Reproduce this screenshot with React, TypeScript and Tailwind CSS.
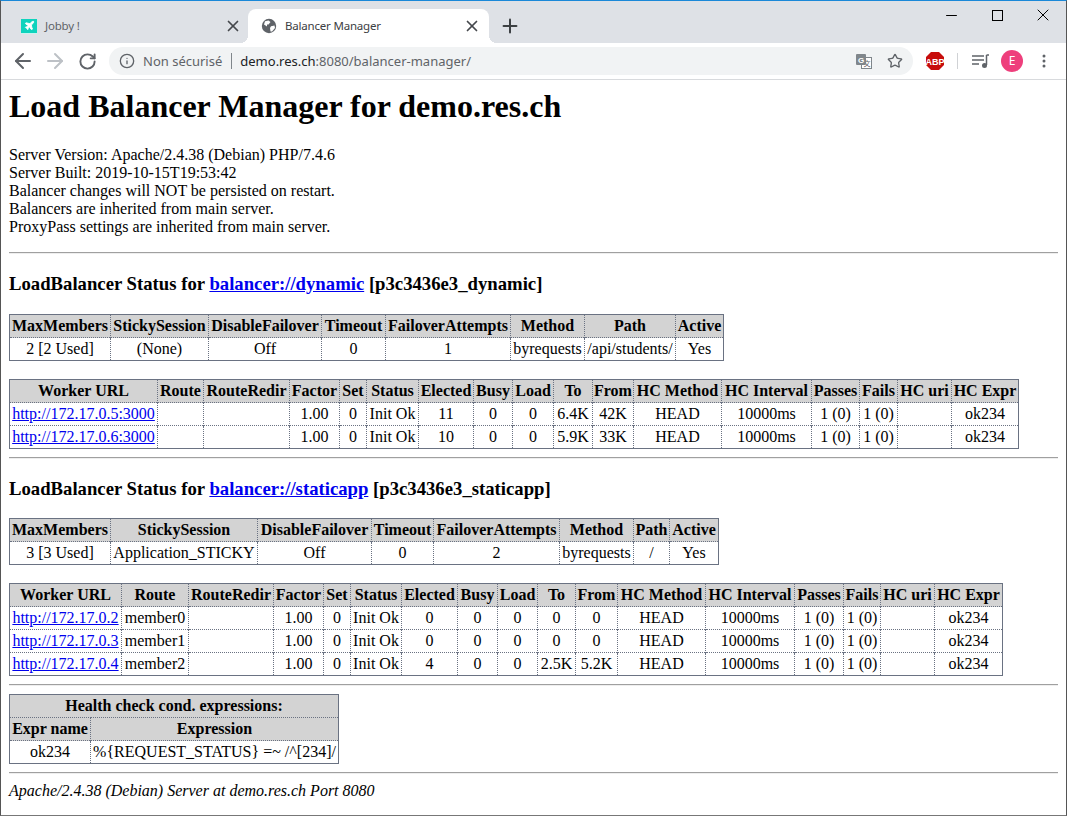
import { ArrowLeft, ArrowRight, RotateCw, Info, Star, X, Plus, Minus, Plane } from 'lucide-react'

const serif = { fontFamily: '"Liberation Serif", serif' }

type Cell = string | { href: string }

const DataTable = ({ head, rows, cols, width, className = '' }: { head: string[]; rows: Cell[][]; cols: string[]; width: string; className?: string }) => (
  <table className={`table-fixed border-collapse border border-gray-500 ${width} ${className}`}>
    <colgroup>
      {cols.map((c, i) => (
        <col key={i} className={c} />
      ))}
    </colgroup>
    <thead>
      <tr>
        {head.map((h, i) => (
          <th key={i} className="whitespace-nowrap bg-[#d3d3d3] px-0 py-[2px] font-bold leading-[18px] border-l border-dotted border-l-gray-500 first:border-l-0">
            {h}
          </th>
        ))}
      </tr>
    </thead>
    <tbody>
      {rows.map((row, r) => (
        <tr key={r}>
          {row.map((c, i) => (
            <td key={i} className="whitespace-nowrap px-0 py-[2px] text-center leading-[18px] border-t border-l border-dotted border-gray-500 first:border-l-0">
              {typeof c === 'string' ? c : <a href={c.href} className="text-[#0000ee] underline">{c.href}</a>}
            </td>
          ))}
        </tr>
      ))}
    </tbody>
  </table>
)

const workerHead = ['Worker URL', 'Route', 'RouteRedir', 'Factor', 'Set', 'Status', 'Elected', 'Busy', 'Load', 'To', 'From', 'HC Method', 'HC Interval', 'Passes', 'Fails', 'HC uri', 'HC Expr']

const worker = (href: string, route: string, elected: string, to: string, from: string): Cell[] => [
  { href }, route, '', '1.00', '0', 'Init Ok', elected, '0', '0', to, from, 'HEAD', '10000ms', '1 (0)', '1 (0)', '', 'ok234',
]

const balancerHead = ['MaxMembers', 'StickySession', 'DisableFailover', 'Timeout', 'FailoverAttempts', 'Method', 'Path', 'Active']

const dynamicCols = ['w-[101px]', 'w-[98px]', 'w-[113px]', 'w-[64px]', 'w-[125px]', 'w-[74px]', 'w-[91px]', 'w-[48px]']
const dynamicWorkerCols = ['w-[148px]', 'w-[46px]', 'w-[86px]', 'w-[50px]', 'w-[27px]', 'w-[52px]', 'w-[55px]', 'w-[39px]', 'w-[41px]', 'w-[39px]', 'w-[41px]', 'w-[88px]', 'w-[90px]', 'w-[48px]', 'w-[38px]', 'w-[54px]', 'w-[67px]']
const staticCols = ['w-[101px]', 'w-[147px]', 'w-[114px]', 'w-[62px]', 'w-[126px]', 'w-[74px]', 'w-[36px]', 'w-[49px]']
const staticWorkerCols = ['w-[112px]', 'w-[67px]', 'w-[85px]', 'w-[50px]', 'w-[27px]', 'w-[51px]', 'w-[56px]', 'w-[40px]', 'w-[40px]', 'w-[38px]', 'w-[42px]', 'w-[88px]', 'w-[89px]', 'w-[49px]', 'w-[37px]', 'w-[54px]', 'w-[68px]']

const Rule = ({ className = '' }: { className?: string }) => <hr className={`border-0 border-t border-b border-t-[#a0a0a0] border-b-[#eeeeee] ${className}`} />

const Globe = () => (
  <svg width="16" height="16" viewBox="0 0 16 16" className="shrink-0">
    <circle cx="8" cy="8" r="7.2" fill="#5f6368" />
    <path d="M4 3.2 7.5 2.5 9.5 4 7.5 6.5 6 6.5 6 8.5 3 6.5ZM10 8.2 13.5 7.5 14 10 11 13.5 9.5 13.5 9 10Z" fill="#fff" />
  </svg>
)

const Tab = ({ active, icon, title }: { active?: boolean; icon: React.ReactNode; title: string }) => (
  <div
    className={
      active
        ? "relative flex h-[34px] w-[241px] items-center rounded-t-[8px] bg-white pl-[13px] pr-[8px] text-[11.5px] tracking-[-0.2px] text-[#3c4043] before:absolute before:bottom-0 before:left-[-8px] before:h-[8px] before:w-[8px] before:bg-[radial-gradient(circle_at_0_0,transparent_8px,white_8px)] before:content-[''] after:absolute after:bottom-0 after:right-[-8px] after:h-[8px] after:w-[8px] after:bg-[radial-gradient(circle_at_100%_0,transparent_8px,white_8px)] after:content-['']"
        : 'flex h-[34px] w-[240px] items-center pl-[13px] pr-[6px] text-[11.5px] tracking-[-0.2px] text-[#5f6368]'
    }
  >
    {icon}
    <span className="ml-[8px] flex-1">{title}</span>
    <X size={18} strokeWidth={1.7} absoluteStrokeWidth className="text-[#45484c]" />
  </div>
)

export default function App() {
  return (
    <div className="flex h-[816px] w-[1067px] flex-col overflow-hidden border-x border-b border-t border-x-[#555] border-b-[#777] border-t-[#1a88d8] bg-white text-black">
      {/* browser chrome */}
      <div className="flex h-[42px] bg-[#dee1e6]" style={{ fontFamily: '"Noto Sans", sans-serif' }}>
        <div className="flex items-end pl-[7px]">
          <Tab
            title="Jobby !"
            icon={
              <span className="flex h-[15px] w-[16px] items-center justify-center border-b border-b-[#c9f3ee] bg-[#0fd3bd]">
                <Plane size={11} className="text-white" fill="white" />
              </span>
            }
          />
          <Tab active title="Balancer Manager" icon={<Globe />} />
          <Plus size={22} strokeWidth={2} absoluteStrokeWidth className="mb-[6px] ml-[10px] text-[#3c4043]" />
        </div>
        <div className="ml-auto flex">
          <div className="flex h-[28px] w-[46px] items-center justify-center"><Minus size={17} strokeWidth={1} absoluteStrokeWidth className="text-black" /></div>
          <div className="flex h-[28px] w-[46px] items-center justify-center"><span className="h-[11px] w-[11px] border border-black" /></div>
          <div className="flex h-[28px] w-[46px] items-center justify-center"><X size={20} strokeWidth={1} absoluteStrokeWidth className="text-black" /></div>
        </div>
      </div>
      <div className="flex h-[37px] items-center border-b border-[#d8dadd] bg-white pl-[10px]" style={{ fontFamily: '"Noto Sans", sans-serif' }}>
        <ArrowLeft size={24} strokeWidth={2} className="text-[#5f6368]" />
        <ArrowRight size={24} strokeWidth={2} className="ml-[8px] text-[#bdc1c6]" />
        <RotateCw size={19} strokeWidth={2.4} className="ml-[11px] text-[#5f6368]" />
        <div className="ml-[12px] flex h-[28px] w-[804px] items-center rounded-full bg-[#f1f3f4] pl-[10px] pr-[10px] text-[13px]">
          <Info size={16} strokeWidth={2} className="text-[#5f6368]" />
          <span className="ml-[8px] pt-px text-[#5f6368]">Non sécurisé</span>
          <span className="ml-[9px] mr-[8px] h-[16px] w-px bg-[#80868b]" />
          <span className="pt-px text-[#202124]">demo.res.ch</span>
          <span className="pt-px text-[#5f6368]">:8080/balancer-manager/</span>
          <svg width="16" height="16" viewBox="0 0 16 16" className="ml-auto shrink-0">
            <rect x="5.5" y="4.5" width="10" height="11" fill="#fff" stroke="#80868b" />
            <text x="11" y="13" textAnchor="middle" fontSize="7" fill="#5f6368" fontFamily="Noto Sans CJK SC, sans-serif">文</text>
            <rect x="0" y="1" width="10" height="11" rx="1" fill="#80868b" />
            <text x="5" y="9.5" textAnchor="middle" fontSize="8" fontWeight="700" fill="#fff" fontFamily="Liberation Sans, sans-serif">G</text>
          </svg>
          <Star size={16} strokeWidth={2} className="ml-[15px] text-[#5f6368]" />
        </div>
        <svg width="18" height="18" viewBox="0 0 18 18" className="ml-[13px] shrink-0">
          <polygon points="5,0 13,0 18,5 18,13 13,18 5,18 0,13 0,5" fill="#c70d0c" />
          <text x="9" y="12.5" textAnchor="middle" fontSize="9" fontWeight="700" fill="#fff" fontFamily="Liberation Sans, sans-serif">ABP</text>
        </svg>
        <span className="ml-[13px] h-[16px] w-px bg-[#d0d2d5]" />
        <svg width="18" height="16" viewBox="0 0 18 16" className="ml-[14px] shrink-0">
          <path d="M0 3h12M0 7h12M0 11h7" stroke="#5f6368" strokeWidth="1.5" fill="none" />
          <path d="M14.5 2v10" stroke="#5f6368" strokeWidth="1.5" />
          <path d="M14.5 2h2.5" stroke="#5f6368" strokeWidth="1.5" />
          <circle cx="12.5" cy="12.5" r="2.5" fill="#5f6368" />
        </svg>
        <span className="ml-[11px] flex h-[22px] w-[22px] items-center justify-center rounded-full bg-[#ee3f7c] text-[12px] text-white">E</span>
        <svg width="4" height="14" viewBox="0 0 4 14" className="ml-[19px] shrink-0">
          <circle cx="2" cy="2" r="1.5" fill="#5f6368" />
          <circle cx="2" cy="7" r="1.5" fill="#5f6368" />
          <circle cx="2" cy="12" r="1.5" fill="#5f6368" />
        </svg>
      </div>

      {/* page */}
      <div className="px-[8px] text-[16px] leading-[18px]" style={serif}>
        <h1 className="mt-[8px] text-[32px] font-bold leading-[37px]">Load Balancer Manager for demo.res.ch</h1>
        <div className="mt-[21px]">
          <div>Server Version: Apache/2.4.38 (Debian) PHP/7.4.6</div>
          <div>Server Built: 2019-10-15T19:53:42</div>
          <div>Balancer changes will NOT be persisted on restart.</div>
          <div>Balancers are inherited from main server.</div>
          <div>ProxyPass settings are inherited from main server.</div>
        </div>
        <Rule className="mt-[16px]" />
        <h3 className="mt-[19px] text-[18.72px] font-bold leading-[21px]">
          LoadBalancer Status for <a href="#" className="text-[#0000ee] underline">balancer://dynamic</a> [p3c3436e3_dynamic]
        </h3>
        <DataTable className="mt-[20px]" width="w-[715px]" cols={dynamicCols} head={balancerHead} rows={[['2 [2 Used]', '(None)', 'Off', '0', '1', 'byrequests', '/api/students/', 'Yes']]} />
        <DataTable
          className="mt-[18px]"
          width="w-[1010px]"
          cols={dynamicWorkerCols}
          head={workerHead}
          rows={[
            worker('http://172.17.0.5:3000', '', '11', '6.4K', '42K'),
            worker('http://172.17.0.6:3000', '', '10', '5.9K', '33K'),
          ]}
        />
        <Rule className="mt-[8px]" />
        <h3 className="mt-[19px] text-[18.72px] font-bold leading-[21px]">
          LoadBalancer Status for <a href="#" className="text-[#0000ee] underline">balancer://staticapp</a> [p3c3436e3_staticapp]
        </h3>
        <DataTable className="mt-[19px]" width="w-[710px]" cols={staticCols} head={balancerHead} rows={[['3 [3 Used]', 'Application_STICKY', 'Off', '0', '2', 'byrequests', '/', 'Yes']]} />
        <DataTable
          className="mt-[18px]"
          width="w-[994px]"
          cols={staticWorkerCols}
          head={workerHead}
          rows={[
            worker('http://172.17.0.2', 'member0', '0', '0', '0'),
            worker('http://172.17.0.3', 'member1', '0', '0', '0'),
            worker('http://172.17.0.4', 'member2', '4', '2.5K', '5.2K'),
          ]}
        />
        <Rule className="mt-[8px]" />
        <table className="mt-[8px] w-[330px] table-fixed border-collapse border border-gray-500">
          <colgroup>
            <col className="w-[81px]" />
            <col className="w-[248px]" />
          </colgroup>
          <thead>
            <tr>
              <th colSpan={2} className="bg-[#d3d3d3] px-0 py-[2px] leading-[18px]">Health check cond. expressions:</th>
            </tr>
            <tr>
              <th className="whitespace-nowrap border-t border-dotted border-gray-500 bg-[#d3d3d3] px-0 py-[2px] leading-[18px]">Expr name</th>
              <th className="border-t border-l border-dotted border-gray-500 bg-[#d3d3d3] px-0 py-[2px] leading-[18px]">Expression</th>
            </tr>
          </thead>
          <tbody>
            <tr>
              <td className="border-t border-dotted border-gray-500 px-0 py-[2px] text-center leading-[18px]">ok234</td>
              <td className="whitespace-nowrap border-t border-l border-dotted border-gray-500 px-0 py-[2px] text-center leading-[18px]">{'%{REQUEST_STATUS} =~ /^[234]/'}</td>
            </tr>
          </tbody>
        </table>
        <Rule className="mt-[8px]" />
        <address className="mt-[8px] italic">Apache/2.4.38 (Debian) Server at demo.res.ch Port 8080</address>
      </div>
    </div>
  )
}
